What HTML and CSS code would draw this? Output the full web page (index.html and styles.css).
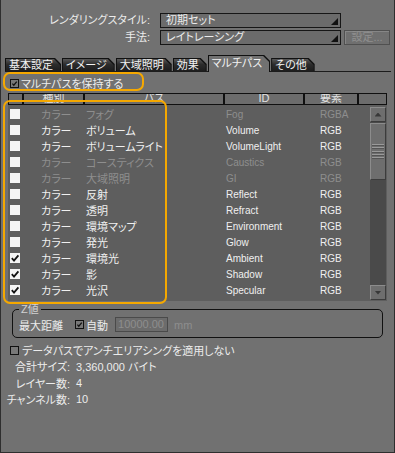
FILE: index.html
```html
<!DOCTYPE html>
<html lang="ja">
<head>
    <meta charset="UTF-8">
    <title>マルチパス</title>
    <link rel="stylesheet" href="styles.css">
</head>
<body>
<div class="window">
    <div class="form-grid">
        <span class="field-label">レンダリングスタイル:</span>
        <div class="select">初期セット<i class="arrow"></i></div>
        <span></span>
        <span class="field-label">手法:</span>
        <div class="select">レイトレーシング<i class="arrow"></i></div>
        <button class="btn" disabled>設定...</button>
    </div>

    <div class="tabs">
        <div class="tab"><div class="tab-face">基本設定</div></div>
        <div class="tab"><div class="tab-face">イメージ</div></div>
        <div class="tab"><div class="tab-face">大域照明</div></div>
        <div class="tab"><div class="tab-face">効果</div></div>
        <div class="tab active"><div class="tab-face">マルチパス</div></div>
        <div class="tab"><div class="tab-face">その他</div></div>
    </div>

    <div class="check-row keep">
        <span class="cb checked"><svg viewBox="0 0 10 10"><path d="M2 5.2 L4 7.4 L8.2 2.4"/></svg></span>
        マルチパスを保持する
    </div>

    <div class="table">
        <div class="thead">
            <div class="th w-cb"></div>
            <div class="th w-kind">種別</div>
            <div class="th w-pass">パス</div>
            <div class="th w-id">ID</div>
            <div class="th w-elem">要素</div>
            <div class="th w-rest"></div>
        </div>
        <div class="tbody">
            <div class="rows" id="rows"></div>
            <div class="scrollbar">
                <div class="sb-btn"><i class="up"></i></div>
                <div class="sb-thumb"><div class="grip"></div></div>
                <div class="sb-track"></div>
                <div class="sb-btn"><i class="down"></i></div>
            </div>
        </div>
    </div>

    <fieldset class="zgroup">
        <legend>Z値</legend>
        <div class="zrow">
            <span>最大距離</span>
            <span class="cb checked auto"><svg viewBox="0 0 10 10"><path d="M2 5.2 L4 7.4 L8.2 2.4"/></svg></span>
            <span class="auto-label">自動</span>
            <span class="num-input">10000.00</span>
            <span class="unit">mm</span>
        </div>
    </fieldset>

    <div class="check-row aa">
        <span class="cb"></span>
        データパスでアンチエリアシングを適用しない
    </div>

    <div class="info">
        <span class="info-label">合計サイズ:</span><span>3,360,000 バイト</span>
        <span class="info-label">レイヤー数:</span><span>4</span>
        <span class="info-label">チャンネル数:</span><span>10</span>
    </div>

    <div class="highlight hl-keep"></div>
    <div class="highlight hl-rows"></div>
</div>

<script>
    // Multipass list: [checked, enabled, pass name, id, element]
    const passes = [
        [false, false, 'フォグ', 'Fog', 'RGBA'],
        [false, true, 'ボリューム', 'Volume', 'RGB'],
        [false, true, 'ボリュームライト', 'VolumeLight', 'RGB'],
        [false, false, 'コースティクス', 'Caustics', 'RGB'],
        [false, false, '大域照明', 'GI', 'RGB'],
        [false, true, '反射', 'Reflect', 'RGB'],
        [false, true, '透明', 'Refract', 'RGB'],
        [false, true, '環境マップ', 'Environment', 'RGB'],
        [false, true, '発光', 'Glow', 'RGB'],
        [true, true, '環境光', 'Ambient', 'RGB'],
        [true, true, '影', 'Shadow', 'RGB'],
        [true, true, '光沢', 'Specular', 'RGB']
    ];

    const rows = document.getElementById('rows');
    const check = '<svg viewBox="0 0 10 10"><path d="M1.8 5.2 L4 7.6 L8.4 2.4"/></svg>';

    passes.forEach(([checked, enabled, name, id, elem]) => {
        const row = document.createElement('div');
        row.className = 'row' + (enabled ? '' : ' disabled');
        row.innerHTML =
            '<span class="cell"><span class="cb-white">' + (checked ? check : '') + '</span></span>' +
            '<span class="cell">カラー</span>' +
            '<span class="cell">' + name + '</span>' +
            '<span class="cell latin">' + id + '</span>' +
            '<span class="cell latin">' + elem + '</span>';
        rows.appendChild(row);
    });
</script>
</body>
</html>
```

FILE: styles.css
```css
* {
    box-sizing: border-box;
}
body {
    margin: 0;
    font-family: "Liberation Sans", "Noto Sans CJK JP", sans-serif;
    font-size: 11px;
    font-feature-settings: "palt";
    color: #ececec;
    background: #717171;
}
.window {
    position: relative;
    width: 395px;
    height: 453px;
    background: #717171;
    box-shadow: inset 1px 0 #2e2e2e, inset -1px -1px #2e2e2e;
    overflow: hidden;
}

/* top selects */
.form-grid {
    display: grid;
    grid-template-columns: 150px 181px 39px;
    grid-auto-rows: 15px;
    column-gap: 10px;
    row-gap: 2px;
    padding-top: 13px;
    align-items: center;
}
.form-grid > :nth-child(3n) {
    margin-left: -7px;
}
.field-label {
    text-align: right;
    line-height: 15px;
}
.select {
    position: relative;
    height: 15px;
    line-height: 13px;
    padding-left: 5px;
    border: 1px solid #161616;
    background: #6b6b6b;
}
.arrow {
    position: absolute;
    right: 2px;
    bottom: 2px;
    width: 7px;
    height: 7px;
    background: #111;
    clip-path: polygon(100% 0, 100% 100%, 0 100%);
}
.btn {
    height: 15px;
    padding: 0;
    font: inherit;
    line-height: 11px;
    color: #8f8f8f;
    background: #6f6f6f;
    border: 1px solid #505050;
    box-shadow: inset 1px 1px #868686;
}

/* tabs */
.tabs {
    display: flex;
    align-items: flex-end;
    gap: 1px;
    margin: 10px 4px 0 5px;
    height: 17px;
    border-bottom: 1px solid #1c1c1c;
}
.tab {
    height: 13px;
    background: #111;
    clip-path: polygon(0 0, calc(100% - 6px) 0, 100% 6px, 100% 100%, 0 100%);
}
.tab-face {
    height: 12px;
    margin: 1px 1px 0 1px;
    padding: 0 7px 0 3px;
    line-height: 12px;
    color: #f2f2f2;
    background: linear-gradient(#575757, #2c2c2c 45%, #1d1d1d);
    clip-path: polygon(0 0, calc(100% - 6px) 0, 100% 6px, 100% 100%, 0 100%);
}
.tab.active {
    height: 17px;
    margin-bottom: -1px;
}
.tab.active .tab-face {
    height: 16px;
    line-height: 14px;
    background: #717171;
}

/* checkboxes */
.check-row {
    display: flex;
    align-items: center;
    gap: 3px;
    height: 14px;
    padding-left: 10px;
}
.keep {
    margin-top: 4px;
    gap: 2px;
}
.cb {
    display: inline-block;
    width: 9px;
    height: 9px;
    border: 1px solid #111;
    background: #787878;
}
.cb svg,
.cb-white svg {
    display: block;
    width: 100%;
    height: 100%;
    fill: none;
    stroke: #111;
    stroke-width: 1.8;
}
.cb-white {
    display: block;
    width: 10px;
    height: 10px;
    margin-left: 2px;
    background: #f4f4f4;
}

/* table */
.table {
    margin: 3px 8px 0 8px;
}
.thead {
    display: flex;
    height: 12px;
}
.th {
    border: 1px solid #101010;
    background: #6c6c6c;
    color: #e2e2e2;
    text-align: center;
    line-height: 9px;
    overflow: hidden;
}
.w-cb { width: 15px; }
.w-kind { width: 61px; }
.w-pass { width: 140px; }
.w-id { width: 80px; }
.w-elem { width: 54px; }
.w-rest { width: 29px; }
.tbody {
    display: flex;
    height: 196px;
    background: #5e5e5e;
}
.rows {
    flex: 1;
    padding-top: 1px;
}
.row {
    display: grid;
    grid-template-columns: 33px 45px 140px 94px 1fr;
    height: 16px;
    align-items: center;
    color: #f0f0f0;
}
.row.disabled {
    color: #8e8e8e;
}
.latin {
    font-size: 10px;
}

/* scrollbar */
.scrollbar {
    display: flex;
    flex-direction: column;
    width: 16px;
    margin: 2px 1px 1px 0;
    background: #4a4a4a;
}
.sb-btn,
.sb-thumb {
    background: #6e6e6e;
    border: 1px solid;
    border-color: #8c8c8c #3c3c3c #3c3c3c #8c8c8c;
}
.sb-btn {
    display: flex;
    align-items: center;
    justify-content: center;
    height: 15px;
}
.sb-btn i {
    width: 7px;
    height: 4px;
    background: #383838;
}
.sb-btn .up {
    clip-path: polygon(50% 0, 100% 100%, 0 100%);
}
.sb-btn .down {
    clip-path: polygon(0 0, 100% 0, 50% 100%);
}
.sb-thumb {
    display: flex;
    align-items: center;
    height: 57px;
    margin-top: 1px;
    padding: 0 1px;
}
.grip {
    width: 100%;
    height: 15px;
    background: repeating-linear-gradient(#9a9a9a 0 1px, #555 1px 2px, transparent 2px 3.3px);
}
.sb-track {
    flex: 1;
}

/* z group */
.zgroup {
    margin: 2px 12px 0 12px;
    padding: 1px 6px 5px 6px;
    border: 1px solid #111;
    border-radius: 5px;
}
.zgroup legend {
    padding: 0 2px;
    line-height: 13px;
    color: #d2d2d2;
}
.zrow {
    display: flex;
    align-items: center;
    height: 15px;
}
.cb.auto {
    margin-left: 12px;
}
.auto-label {
    margin-left: 2px;
}
.num-input {
    width: 53px;
    height: 15px;
    margin-left: 7px;
    padding-right: 3px;
    line-height: 13px;
    text-align: right;
    color: #8e8e8e;
    background: #6c6c6c;
    border: 1px solid #4a4a4a;
}
.unit {
    margin-left: 6px;
    color: #8e8e8e;
}
.aa {
    height: 16px;
    margin-top: 4px;
}

/* summary */
.info {
    display: grid;
    grid-template-columns: 70px auto;
    grid-auto-rows: 16.5px;
    column-gap: 6px;
    align-items: center;
}
.info-label {
    text-align: right;
}

/* orange callouts */
.highlight {
    position: absolute;
    border: 2px solid #f5a800;
    border-radius: 7px;
}
.hl-keep {
    left: 3px;
    top: 72px;
    width: 141px;
    height: 19px;
}
.hl-rows {
    left: 3px;
    top: 100px;
    width: 164px;
    height: 204px;
}
```
